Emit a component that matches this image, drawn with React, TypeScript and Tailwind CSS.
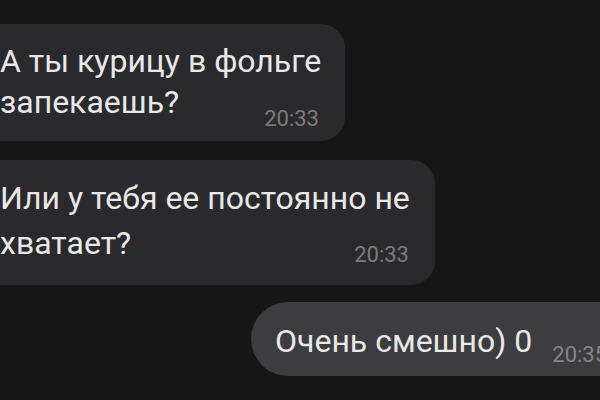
const font = { fontFamily: "Roboto, 'Noto Sans', sans-serif" };

export default function App() {
  return (
    <div
      className="w-[600px] h-[400px] overflow-hidden bg-[#161616] text-[#e8e8e8] flex flex-col items-start pt-[24px]"
      style={font}
    >
      {/* incoming message 1 */}
      <div className="ml-[-22px] w-[367px] rounded-[24px] bg-[#2a2a2c] pl-[22px] pr-[26px] pt-[17px] pb-[18px] text-[32px] leading-[41px] whitespace-nowrap">
        <div>А ты курицу в фольге</div>
        <div className="flex justify-between items-end">
          <span>запекаешь?</span>
          <span className="text-[22px] leading-none text-[#7b7b7d] mb-[-7px]">20:33</span>
        </div>
      </div>

      {/* incoming message 2 */}
      <div className="mt-[19px] ml-[-22px] w-[457px] rounded-[24px] bg-[#2a2a2c] pl-[22px] pr-[26px] pt-[16px] pb-[19px] text-[32px] leading-[45px] whitespace-nowrap">
        <div>Или у тебя ее постоянно не</div>
        <div className="flex justify-between items-end">
          <span>хватает?</span>
          <span className="text-[22px] leading-none text-[#7b7b7d]">20:33</span>
        </div>
      </div>

      {/* outgoing message */}
      <div className="mt-[17px] ml-[251px] w-[400px] h-[74px] shrink-0 rounded-full bg-[#3d3d3f] pl-[24px] flex items-center gap-[20px]">
        <span className="text-[32px] leading-none whitespace-nowrap mt-[3px]">Очень смешно) 0</span>
        <span className="text-[22px] leading-none text-[#858587] mt-[31px]">20:35</span>
      </div>
    </div>
  );
}
